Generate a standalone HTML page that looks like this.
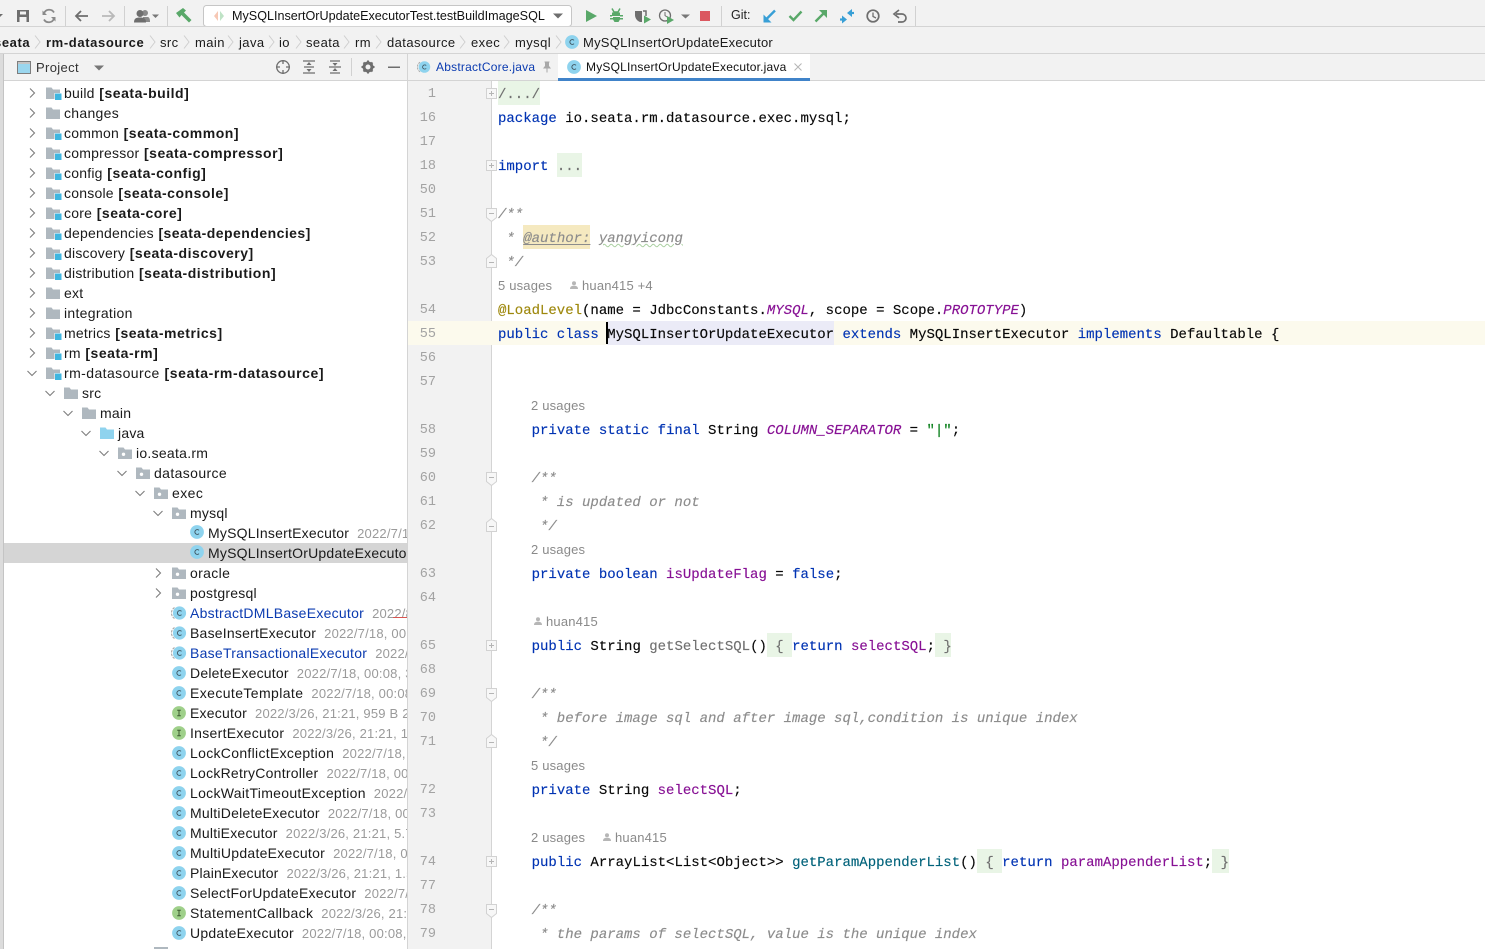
<!DOCTYPE html>
<html><head><meta charset="utf-8"><title>MySQLInsertOrUpdateExecutor</title>
<style>
html,body{margin:0;padding:0;width:1485px;height:949px;overflow:hidden;background:#fff;font-family:"Liberation Sans",sans-serif;color:#000}
.a{position:absolute}
#top{left:0;top:0;width:1485px;height:54px;background:#f2f2f2}
.sep{position:absolute;top:6px;width:1px;height:20px;background:#d1d1d1}
.bc{position:absolute;top:27px;height:26px;line-height:31px;font-size:13px;letter-spacing:.42px;white-space:pre;color:#1a1a1a}
.ch{position:absolute;top:35px}
#tree{left:4px;top:81px;width:403px;height:868px;overflow:hidden;background:#fff}
.r{position:absolute;left:0;width:403px;height:20px;line-height:20px;font-size:14px;letter-spacing:.22px;white-space:pre;color:#1a1a1a}
.r b{font-weight:bold;letter-spacing:.52px;margin-left:.5px}
.r i{font-style:normal;color:#9a9a9a;font-size:13px;letter-spacing:.2px;margin-left:8px}
.r svg{position:absolute;top:0}
.t{position:absolute;top:0}
.bl{color:#0b3bb0}
.l{position:absolute;left:498px;height:24px;line-height:28px;font-family:"Liberation Mono",monospace;font-size:14px;white-space:pre;color:#080808;-webkit-text-stroke:.15px}
.n{position:absolute;left:408px;width:28px;height:24px;line-height:28px;text-align:right;font-family:"Liberation Mono",monospace;font-size:13.5px;color:#a3a3a3}
.u{position:absolute;left:498px;height:24px;line-height:26px;font-size:13px;letter-spacing:.18px;color:#8a8a8a;white-space:pre}
.k{color:#0033b3}.c{color:#8c8c8c;font-style:italic}.f{color:#871094}.fi{color:#871094;font-style:italic}.m{color:#00627a}.g{color:#707070}.s{color:#067d17}.y{color:#9e880d}
.fold{background:#e9f5e6}
</style></head><body>
<svg width="0" height="0" style="position:absolute">
<defs>
<symbol id="fo" viewBox="0 0 16 16"><path d="M0 2.500h5.500l1.500 2h7v9.500H0z" fill="#afb8bf"/></symbol>
<symbol id="mo" viewBox="0 0 16 16"><path d="M0 2.500h5.500l1.500 2h7v9.500H0z" fill="#afb8bf"/><rect x="8.500" y="8" width="7" height="7" fill="#fff"/><rect x="9" y="8.500" width="6.500" height="6.500" fill="#40b6e0"/></symbol>
<symbol id="sr" viewBox="0 0 16 16"><path d="M0 2.500h5.500l1.500 2h7v9.500H0z" fill="#8fd3ee"/></symbol>
<symbol id="pk" viewBox="0 0 16 16"><path d="M0 2.500h5.500l1.500 2h7v9.500H0z" fill="#afb8bf"/><circle cx="5.500" cy="9.300" r="1.700" fill="#fff"/></symbol>
<symbol id="cl" viewBox="0 0 16 16"><circle cx="8" cy="8" r="6.900" fill="#8ed3ee"/><path d="M10 6.300A2.400 2.400 0 1 0 10 9.700" fill="none" stroke="#3f5560" stroke-width="1"/></symbol>
<symbol id="ab" viewBox="0 0 16 16"><path d="M3.500 2.500A6.500 6.500 0 0 0 3.500 13.500" fill="none" stroke="#a9a9a9" stroke-width="1.100" stroke-dasharray="2.500 1"/><circle cx="8.500" cy="8" r="6.600" fill="#8ed3ee"/><path d="M10.500 6.300A2.400 2.400 0 1 0 10.500 9.700" fill="none" stroke="#3f5560" stroke-width="1"/></symbol>
<symbol id="in" viewBox="0 0 16 16"><circle cx="8" cy="8" r="6.900" fill="#9fd08a"/><path d="M6.200 5.200h3.600M6.200 10.800h3.600M8 5.200v5.600" fill="none" stroke="#3c5a30" stroke-width="1"/></symbol>
<symbol id="cr" viewBox="0 0 10 10"><path d="M3 .5l4.500 4.500L3 9.500" fill="none" stroke="#7d7d7d" stroke-width="1.100"/></symbol>
<symbol id="cd" viewBox="0 0 10 10"><path d="M.5 3L5 7.500 9.500 3" fill="none" stroke="#7d7d7d" stroke-width="1.100"/></symbol>
<symbol id="gc" viewBox="0 0 7 14"><path d="M1 .5l5 6.500-5 6.500" fill="none" stroke="#cfcfcf" stroke-width="1"/></symbol>
<symbol id="fp" viewBox="0 0 11 11"><rect x=".5" y=".5" width="10" height="10" fill="#f7f7f7" stroke="#d2d2d2"/><path d="M3 5.500h5M5.500 3v5" stroke="#b5b5b5"/></symbol>
<symbol id="fm" viewBox="0 0 11 14"><path d="M.5.500h10v9l-5 4-5-4z" fill="#f7f7f7" stroke="#d2d2d2"/><path d="M3 5.500h5" stroke="#b5b5b5"/></symbol>
<symbol id="fe" viewBox="0 0 11 14"><path d="M.5 13.500h10v-9l-5-4-5 4z" fill="#f7f7f7" stroke="#d2d2d2"/><path d="M3 8.500h5" stroke="#b5b5b5"/></symbol>
<symbol id="pr" viewBox="0 0 10 10"><circle cx="5" cy="3.200" r="2" fill="#b6b6b6"/><path d="M1 9c0-2.500 1.500-3.300 4-3.300S9 6.500 9 9z" fill="#b6b6b6"/></symbol>
</defs></svg>

<div class="a" id="top"></div>

<!-- toolbar icons -->
<svg class="a" style="left:0;top:0" width="925" height="27" viewBox="0 0 925 27">
<path d="M0 14h3l-3 3z" fill="#6e6e6e"/>
<path d="M17 10h12v12H17z" fill="#6e6e6e"/><rect x="20" y="11.500" width="6" height="3" fill="#f2f2f2"/><rect x="19.500" y="17" width="7" height="5" fill="#f2f2f2"/>
<path d="M54 12.500A5.500 5.500 0 0 0 44 13.500M44 19.500A5.500 5.500 0 0 0 54 18.500" fill="none" stroke="#8a8a8a" stroke-width="1.800"/><path d="M42.500 10.500v4.500h4.500zM55.500 21.500V17H51z" fill="#8a8a8a"/>
<path d="M88 16H76M81 11l-5 5 5 5" fill="none" stroke="#6e6e6e" stroke-width="1.800"/>
<path d="M102 16h12M109 11l5 5-5 5" fill="none" stroke="#b9b9b9" stroke-width="1.800"/>
<circle cx="145" cy="13" r="3" fill="#8a8a8a"/><path d="M143 22v-5h5c1.500.5 2 2 2 5z" fill="#8a8a8a"/><circle cx="140" cy="13.500" r="3.500" fill="#6e6e6e"/><path d="M134 22.500c0-4 2-5 6-5s6 1 6 5z" fill="#6e6e6e"/><path d="M152 14.500h7l-3.500 3.500z" fill="#777"/>
<path d="M176 13l7-5 3 2.500-2 2 7.500 7.500-2.500 2.500-7.500-7.500-2 2.500z" fill="#59a869"/>
<rect x="203.500" y="5.500" width="368" height="21" rx="3" fill="#fff" stroke="#c6c6c6"/>
<path d="M218 11l-4 5 4 5z" fill="#f7c8b5"/><path d="M220 11l4 5-4 5z" fill="#bfe3c6"/>
<path d="M553 13.500h10l-5 5z" fill="#6e6e6e"/>
<path d="M586 10l11 6-11 6z" fill="#59a869"/>
<path d="M612 12.500h8v2.500h3v1.500h-3v1.500h3V19.500h-3l-1.500 2.500h-4L613 19.500h-3V18h3v-1.500h-3V15h2z" fill="#59a869"/><path d="M612 8.500l2 3.500h4l2-3.500" fill="none" stroke="#59a869" stroke-width="1.500"/><path d="M612 16.500h8" stroke="#f2f2f2"/>
<path d="M635 11h7v11h-2c-3-1-5-4-5-7z" fill="#6e6e6e"/><path d="M643 11h3v5" fill="none" stroke="#6e6e6e" stroke-width="1.500"/><path d="M644 15.500l7 4-7 4z" fill="#59a869"/>
<circle cx="665" cy="15.500" r="5.500" fill="none" stroke="#6e6e6e" stroke-width="1.300"/><path d="M665 12V15.500l2 1.500" fill="none" stroke="#6e6e6e"/><path d="M667 16l7 4-7 4z" fill="#59a869"/>
<path d="M681 14.500h9l-4.500 4z" fill="#777"/>
<rect x="700" y="11" width="10" height="10" fill="#db5860"/>
<path d="M775 10.500l-8 8" fill="none" stroke="#389fd6" stroke-width="2.400"/><path d="M763.500 14.500v8h8z" fill="#389fd6"/>
<path d="M789.500 16l4 4 8-8.500" fill="none" stroke="#59a869" stroke-width="2.400"/>
<path d="M815.500 21.500l8-8" fill="none" stroke="#59a869" stroke-width="2.400"/><path d="M819 10h8v8z" fill="#59a869"/>
<path d="M840 19.500h3" stroke="#389fd6" stroke-width="2.200"/><path d="M842 15.500l5 4-5 4z" fill="#389fd6"/><path d="M851 13h3" stroke="#389fd6" stroke-width="2.200"/><path d="M852 9l-5 4 5 4z" fill="#389fd6"/>
<circle cx="873" cy="16" r="5.800" fill="none" stroke="#6e6e6e" stroke-width="1.700"/><path d="M873 12.500V16.500l3 1.500" fill="none" stroke="#6e6e6e" stroke-width="1.300"/>
<path d="M896 14h6a4 4 0 0 1 0 8h-4" fill="none" stroke="#6e6e6e" stroke-width="1.700"/><path d="M899 10l-5 4 5 4" fill="none" stroke="#6e6e6e" stroke-width="1.700"/>
</svg>
<div class="sep" style="left:65px"></div><div class="sep" style="left:124px"></div><div class="sep" style="left:167px"></div><div class="sep" style="left:721px"></div><div class="sep" style="left:915px"></div>
<div class="a" style="left:232px;top:5px;height:22px;line-height:23px;font-size:12.6px;white-space:pre;color:#111">MySQLInsertOrUpdateExecutorTest.testBuildImageSQL</div>
<div class="a" style="left:731px;top:5px;height:22px;line-height:21px;font-size:12.5px;white-space:pre;color:#222">Git:</div>

<!-- breadcrumb -->
<div class="a" style="left:0;top:26px;width:1485px;height:1px;background:#d4d4d4"></div>
<div class="a" style="left:0;top:53px;width:1485px;height:1px;background:#d4d4d4"></div>
<div class="bc" style="left:-6px;font-weight:bold;letter-spacing:.6px">seata</div>
<div class="bc" style="left:46px;font-weight:bold;letter-spacing:.62px">rm-datasource</div>
<div class="bc" style="left:160px">src</div>
<div class="bc" style="left:195px">main</div>
<div class="bc" style="left:239px">java</div>
<div class="bc" style="left:279px">io</div>
<div class="bc" style="left:306px">seata</div>
<div class="bc" style="left:355px">rm</div>
<div class="bc" style="left:387px">datasource</div>
<div class="bc" style="left:471px">exec</div>
<div class="bc" style="left:515px">mysql</div>
<div class="bc" style="left:583px;letter-spacing:.24px">MySQLInsertOrUpdateExecutor</div>
<svg class="ch" style="left:34px" width="7" height="14"><use href="#gc"/></svg>
<svg class="ch" style="left:149px" width="7" height="14"><use href="#gc"/></svg>
<svg class="ch" style="left:183px" width="7" height="14"><use href="#gc"/></svg>
<svg class="ch" style="left:227px" width="7" height="14"><use href="#gc"/></svg>
<svg class="ch" style="left:268px" width="7" height="14"><use href="#gc"/></svg>
<svg class="ch" style="left:295px" width="7" height="14"><use href="#gc"/></svg>
<svg class="ch" style="left:343px" width="7" height="14"><use href="#gc"/></svg>
<svg class="ch" style="left:375px" width="7" height="14"><use href="#gc"/></svg>
<svg class="ch" style="left:459px" width="7" height="14"><use href="#gc"/></svg>
<svg class="ch" style="left:503px" width="7" height="14"><use href="#gc"/></svg>
<svg class="ch" style="left:555px" width="7" height="14"><use href="#gc"/></svg>
<svg class="a" style="left:565px;top:35px" width="14" height="14" viewBox="1 1 14 14"><use href="#cl" width="16" height="16"/></svg>

<!-- project header -->
<div class="a" style="left:0;top:54px;width:1485px;height:26px;background:#f2f2f2"></div>
<div class="a" style="left:0;top:80px;width:1485px;height:1px;background:#d4d4d4"></div>
<div class="a" style="left:407px;top:54px;width:1px;height:895px;background:#d4d4d4"></div>
<div class="a" style="left:0;top:54px;width:3px;height:895px;background:#dcdcdc"></div>
<div class="a" style="left:3px;top:54px;width:1px;height:895px;background:#c4c4c4"></div>
<svg class="a" style="left:0;top:54px" width="407" height="26">
<rect x="17.500" y="7.500" width="13" height="12" fill="#9ad6ee" stroke="#7d7d7d"/><rect x="18" y="8" width="12" height="2" fill="#c4c4c4"/>
<path d="M94 11.500h10l-5 5z" fill="#777"/>
<circle cx="283" cy="13" r="6.300" fill="none" stroke="#6e6e6e" stroke-width="1.300"/><path d="M283 6v4M283 16v4M276 13h4M286 13h4" stroke="#6e6e6e" stroke-width="1.300"/>
<path d="M303 7h12M303 19h12M304 13h10" stroke="#6e6e6e" stroke-width="1.300"/><path d="M309 8l-2.500 3h5zM309 18l-2.500-3h5z" fill="#6e6e6e"/>
<path d="M329 13h12M330 7h10M330 19h10" stroke="#6e6e6e" stroke-width="1.300"/><path d="M335 12l-2.500-3h5zM335 14l-2.500 3h5z" fill="#6e6e6e"/>
<rect x="351" y="4" width="1" height="18" fill="#d1d1d1"/>
<circle cx="368" cy="13" r="4" fill="none" stroke="#6e6e6e" stroke-width="3"/><path d="M368 6.500v2M368 17.500v2M361.500 13h2M372.500 13h2M363.500 8.500l1.500 1.500M371 16l1.500 1.500M372.500 8.500L371 10M365 16l-1.500 1.500" stroke="#6e6e6e" stroke-width="2"/>
<rect x="388" y="12.500" width="12" height="1.500" fill="#6e6e6e"/>
</svg>
<div class="a" style="left:36px;top:54px;height:26px;line-height:27px;font-size:13px;letter-spacing:.35px;color:#333">Project</div>

<!-- tabs -->
<svg class="a" style="left:417px;top:60px" width="14" height="14" viewBox="0 0 16 16"><use href="#ab" width="16" height="16"/></svg>
<div class="a" style="left:436px;top:54px;height:26px;line-height:26px;font-size:12px;letter-spacing:.23px;color:#0b3bb0;white-space:pre">AbstractCore.java</div>
<svg class="a" style="left:542px;top:61px" width="10" height="12" viewBox="0 0 10 12"><path d="M2.500 1h5M3.500 1v4L2 7h6L6.500 5V1M5 7v4.500" fill="#a8a8a8" stroke="#a8a8a8"/></svg>
<div class="a" style="left:558px;top:54px;width:252px;height:24px;background:#fff"></div>
<div class="a" style="left:558px;top:78px;width:252px;height:3px;background:#4083c9"></div>
<svg class="a" style="left:567px;top:60px" width="14" height="14" viewBox="1 1 14 14"><use href="#cl" width="16" height="16"/></svg>
<div class="a" style="left:586px;top:54px;height:26px;line-height:26px;font-size:12px;letter-spacing:.2px;color:#111;white-space:pre">MySQLInsertOrUpdateExecutor.java</div>
<svg class="a" style="left:794px;top:63px" width="8" height="8"><path d="M.5.500l7 7M7.500.500l-7 7" stroke="#b5b5b5"/></svg>

<!-- tree -->
<div class="a" id="tree">
<div class="a" style="left:0;top:462px;width:403px;height:20px;background:#d5d5d5"></div>
<div class="r" style="top:2px"><svg style="left:23px;top:5px" width="10" height="10"><use href="#cr"/></svg><svg style="left:42px;top:2px" width="16" height="16"><use href="#mo"/></svg><span class="t" style="left:60px">build <b>[seata-build]</b></span></div>
<div class="r" style="top:22px"><svg style="left:23px;top:5px" width="10" height="10"><use href="#cr"/></svg><svg style="left:42px;top:2px" width="16" height="16"><use href="#fo"/></svg><span class="t" style="left:60px;letter-spacing:.3px">changes</span></div>
<div class="r" style="top:42px"><svg style="left:23px;top:5px" width="10" height="10"><use href="#cr"/></svg><svg style="left:42px;top:2px" width="16" height="16"><use href="#mo"/></svg><span class="t" style="left:60px">common <b>[seata-common]</b></span></div>
<div class="r" style="top:62px"><svg style="left:23px;top:5px" width="10" height="10"><use href="#cr"/></svg><svg style="left:42px;top:2px" width="16" height="16"><use href="#mo"/></svg><span class="t" style="left:60px">compressor <b>[seata-compressor]</b></span></div>
<div class="r" style="top:82px"><svg style="left:23px;top:5px" width="10" height="10"><use href="#cr"/></svg><svg style="left:42px;top:2px" width="16" height="16"><use href="#mo"/></svg><span class="t" style="left:60px">config <b>[seata-config]</b></span></div>
<div class="r" style="top:102px"><svg style="left:23px;top:5px" width="10" height="10"><use href="#cr"/></svg><svg style="left:42px;top:2px" width="16" height="16"><use href="#mo"/></svg><span class="t" style="left:60px">console <b>[seata-console]</b></span></div>
<div class="r" style="top:122px"><svg style="left:23px;top:5px" width="10" height="10"><use href="#cr"/></svg><svg style="left:42px;top:2px" width="16" height="16"><use href="#mo"/></svg><span class="t" style="left:60px">core <b>[seata-core]</b></span></div>
<div class="r" style="top:142px"><svg style="left:23px;top:5px" width="10" height="10"><use href="#cr"/></svg><svg style="left:42px;top:2px" width="16" height="16"><use href="#mo"/></svg><span class="t" style="left:60px">dependencies <b style="letter-spacing:.46px">[seata-dependencies]</b></span></div>
<div class="r" style="top:162px"><svg style="left:23px;top:5px" width="10" height="10"><use href="#cr"/></svg><svg style="left:42px;top:2px" width="16" height="16"><use href="#mo"/></svg><span class="t" style="left:60px">discovery <b>[seata-discovery]</b></span></div>
<div class="r" style="top:182px"><svg style="left:23px;top:5px" width="10" height="10"><use href="#cr"/></svg><svg style="left:42px;top:2px" width="16" height="16"><use href="#mo"/></svg><span class="t" style="left:60px">distribution <b>[seata-distribution]</b></span></div>
<div class="r" style="top:202px"><svg style="left:23px;top:5px" width="10" height="10"><use href="#cr"/></svg><svg style="left:42px;top:2px" width="16" height="16"><use href="#fo"/></svg><span class="t" style="left:60px">ext</span></div>
<div class="r" style="top:222px"><svg style="left:23px;top:5px" width="10" height="10"><use href="#cr"/></svg><svg style="left:42px;top:2px" width="16" height="16"><use href="#fo"/></svg><span class="t" style="left:60px;letter-spacing:.3px">integration</span></div>
<div class="r" style="top:242px"><svg style="left:23px;top:5px" width="10" height="10"><use href="#cr"/></svg><svg style="left:42px;top:2px" width="16" height="16"><use href="#mo"/></svg><span class="t" style="left:60px">metrics <b>[seata-metrics]</b></span></div>
<div class="r" style="top:262px"><svg style="left:23px;top:5px" width="10" height="10"><use href="#cr"/></svg><svg style="left:42px;top:2px" width="16" height="16"><use href="#mo"/></svg><span class="t" style="left:60px">rm <b>[seata-rm]</b></span></div>
<div class="r" style="top:282px"><svg style="left:23px;top:5px" width="10" height="10"><use href="#cd"/></svg><svg style="left:42px;top:2px" width="16" height="16"><use href="#mo"/></svg><span class="t" style="left:60px;letter-spacing:.42px">rm-datasource <b style="letter-spacing:.6px">[seata-rm-datasource]</b></span></div>
<div class="r" style="top:302px"><svg style="left:41px;top:5px" width="10" height="10"><use href="#cd"/></svg><svg style="left:60px;top:2px" width="16" height="16"><use href="#fo"/></svg><span class="t" style="left:78px">src</span></div>
<div class="r" style="top:322px"><svg style="left:59px;top:5px" width="10" height="10"><use href="#cd"/></svg><svg style="left:78px;top:2px" width="16" height="16"><use href="#fo"/></svg><span class="t" style="left:96px">main</span></div>
<div class="r" style="top:342px"><svg style="left:77px;top:5px" width="10" height="10"><use href="#cd"/></svg><svg style="left:96px;top:2px" width="16" height="16"><use href="#sr"/></svg><span class="t" style="left:114px">java</span></div>
<div class="r" style="top:362px"><svg style="left:95px;top:5px" width="10" height="10"><use href="#cd"/></svg><svg style="left:114px;top:2px" width="16" height="16"><use href="#pk"/></svg><span class="t" style="left:132px;letter-spacing:.27px">io.seata.rm</span></div>
<div class="r" style="top:382px"><svg style="left:113px;top:5px" width="10" height="10"><use href="#cd"/></svg><svg style="left:132px;top:2px" width="16" height="16"><use href="#pk"/></svg><span class="t" style="left:150px;letter-spacing:.38px">datasource</span></div>
<div class="r" style="top:402px"><svg style="left:131px;top:5px" width="10" height="10"><use href="#cd"/></svg><svg style="left:150px;top:2px" width="16" height="16"><use href="#pk"/></svg><span class="t" style="left:168px;letter-spacing:.45px">exec</span></div>
<div class="r" style="top:422px"><svg style="left:149px;top:5px" width="10" height="10"><use href="#cd"/></svg><svg style="left:168px;top:2px" width="16" height="16"><use href="#pk"/></svg><span class="t" style="left:186px">mysql</span></div>
<div class="r" style="top:442px"><svg style="left:186px;top:2px" width="14" height="14" viewBox="1 1 14 14"><use href="#cl" width="16" height="16"/></svg><span class="t" style="left:204px">MySQLInsertExecutor<i>2022/7/18, 00:08, 5.2 kB</i></span></div>
<div class="r" style="top:462px"><svg style="left:186px;top:2px" width="14" height="14" viewBox="1 1 14 14"><use href="#cl" width="16" height="16"/></svg><span class="t" style="left:204px">MySQLInsertOrUpdateExecutor</span></div>
<div class="r" style="top:482px"><svg style="left:149px;top:5px" width="10" height="10"><use href="#cr"/></svg><svg style="left:168px;top:2px" width="16" height="16"><use href="#pk"/></svg><span class="t" style="left:186px;letter-spacing:.35px">oracle</span></div>
<div class="r" style="top:502px"><svg style="left:149px;top:5px" width="10" height="10"><use href="#cr"/></svg><svg style="left:168px;top:2px" width="16" height="16"><use href="#pk"/></svg><span class="t" style="left:186px">postgresql</span></div>
<div class="r" style="top:522px"><svg style="left:167px;top:2px" width="16" height="16"><use href="#ab"/></svg><span class="t bl" style="left:186px;letter-spacing:.26px">AbstractDMLBaseExecutor<i>2022/8/1, 00:08</i></span></div>
<div class="r" style="top:542px"><svg style="left:167px;top:2px" width="16" height="16"><use href="#ab"/></svg><span class="t" style="left:186px">BaseInsertExecutor<i>2022/7/18, 00:08</i></span></div>
<div class="r" style="top:562px"><svg style="left:167px;top:2px" width="16" height="16"><use href="#ab"/></svg><span class="t bl" style="left:186px;letter-spacing:.26px">BaseTransactionalExecutor<i>2022/7/18</i></span></div>
<div class="r" style="top:582px"><svg style="left:167px;top:2px" width="16" height="16"><use href="#cl"/></svg><span class="t" style="left:186px">DeleteExecutor<i>2022/7/18, 00:08, 3 kB</i></span></div>
<div class="r" style="top:602px"><svg style="left:167px;top:2px" width="16" height="16"><use href="#cl"/></svg><span class="t" style="left:186px;letter-spacing:.4px">ExecuteTemplate<i>2022/7/18, 00:08</i></span></div>
<div class="r" style="top:622px"><svg style="left:167px;top:2px" width="16" height="16"><use href="#in"/></svg><span class="t" style="left:186px">Executor<i>2022/3/26, 21:21, 959 B 2022</i></span></div>
<div class="r" style="top:642px"><svg style="left:167px;top:2px" width="16" height="16"><use href="#in"/></svg><span class="t" style="left:186px;letter-spacing:.29px">InsertExecutor<i>2022/3/26, 21:21, 1.2 kB</i></span></div>
<div class="r" style="top:662px"><svg style="left:167px;top:2px" width="16" height="16"><use href="#cl"/></svg><span class="t" style="left:186px;letter-spacing:.31px">LockConflictException<i>2022/7/18, 00:08</i></span></div>
<div class="r" style="top:682px"><svg style="left:167px;top:2px" width="16" height="16"><use href="#cl"/></svg><span class="t" style="left:186px;letter-spacing:.25px">LockRetryController<i>2022/7/18, 00:08</i></span></div>
<div class="r" style="top:702px"><svg style="left:167px;top:2px" width="16" height="16"><use href="#cl"/></svg><span class="t" style="left:186px;letter-spacing:.3px">LockWaitTimeoutException<i>2022/7/18</i></span></div>
<div class="r" style="top:722px"><svg style="left:167px;top:2px" width="16" height="16"><use href="#cl"/></svg><span class="t" style="left:186px;letter-spacing:.24px">MultiDeleteExecutor<i>2022/7/18, 00:08</i></span></div>
<div class="r" style="top:742px"><svg style="left:167px;top:2px" width="16" height="16"><use href="#cl"/></svg><span class="t" style="left:186px">MultiExecutor<i>2022/3/26, 21:21, 5.7 kB</i></span></div>
<div class="r" style="top:762px"><svg style="left:167px;top:2px" width="16" height="16"><use href="#cl"/></svg><span class="t" style="left:186px;letter-spacing:.27px">MultiUpdateExecutor<i>2022/7/18, 00:08</i></span></div>
<div class="r" style="top:782px"><svg style="left:167px;top:2px" width="16" height="16"><use href="#cl"/></svg><span class="t" style="left:186px;letter-spacing:.16px">PlainExecutor<i>2022/3/26, 21:21, 1.5 kB</i></span></div>
<div class="r" style="top:802px"><svg style="left:167px;top:2px" width="16" height="16"><use href="#cl"/></svg><span class="t" style="left:186px;letter-spacing:.26px">SelectForUpdateExecutor<i>2022/7/18</i></span></div>
<div class="r" style="top:822px"><svg style="left:167px;top:2px" width="16" height="16"><use href="#in"/></svg><span class="t" style="left:186px;letter-spacing:.34px">StatementCallback<i>2022/3/26, 21:21</i></span></div>
<div class="r" style="top:842px"><svg style="left:167px;top:2px" width="16" height="16"><use href="#cl"/></svg><span class="t" style="left:186px;letter-spacing:.25px">UpdateExecutor<i>2022/7/18, 00:08, 3 kB</i></span></div>
<div class="a" style="left:389px;top:536px;width:14px;height:1px;background:#d9534f"></div>
<div class="a" style="left:150px;top:866px;width:14px;height:2px;background:#afb8bf"></div>
</div>

<!-- gutter -->
<div class="a" style="left:408px;top:81px;width:83px;height:868px;background:#f2f2f2"></div>
<div class="a" style="left:491px;top:81px;width:1px;height:868px;background:#d4d4d4"></div>
<div class="a" style="left:408px;top:321px;width:1077px;height:24px;background:#fcfaed"></div>
<div class="a" style="left:607px;top:321px;width:227px;height:24px;background:#ebebf7"></div>
<div class="a" style="left:606px;top:322px;width:2px;height:22px;background:#000"></div>

<!-- fold backgrounds -->
<div class="a fold" style="left:498px;top:81px;width:42px;height:24px"></div>
<div class="a fold" style="left:557px;top:153px;width:25px;height:24px"></div>
<div class="a" style="left:523px;top:225px;width:67px;height:24px;background:#f5e9c0"></div>
<div class="a fold" style="left:767px;top:633px;width:25px;height:24px"></div>
<div class="a fold" style="left:935px;top:633px;width:16px;height:24px"></div>
<div class="a fold" style="left:977px;top:849px;width:25px;height:24px"></div>
<div class="a fold" style="left:1212px;top:849px;width:17px;height:24px"></div>

<!-- line numbers -->
<div class="n" style="top:81px">1</div><div class="n" style="top:105px">16</div><div class="n" style="top:129px">17</div><div class="n" style="top:153px">18</div><div class="n" style="top:177px">50</div><div class="n" style="top:201px">51</div><div class="n" style="top:225px">52</div><div class="n" style="top:249px">53</div><div class="n" style="top:297px">54</div><div class="n" style="top:321px">55</div><div class="n" style="top:345px">56</div><div class="n" style="top:369px">57</div><div class="n" style="top:417px">58</div><div class="n" style="top:441px">59</div><div class="n" style="top:465px">60</div><div class="n" style="top:489px">61</div><div class="n" style="top:513px">62</div><div class="n" style="top:561px">63</div><div class="n" style="top:585px">64</div><div class="n" style="top:633px">65</div><div class="n" style="top:657px">68</div><div class="n" style="top:681px">69</div><div class="n" style="top:705px">70</div><div class="n" style="top:729px">71</div><div class="n" style="top:777px">72</div><div class="n" style="top:801px">73</div><div class="n" style="top:849px">74</div><div class="n" style="top:873px">77</div><div class="n" style="top:897px">78</div><div class="n" style="top:921px">79</div>

<!-- fold markers -->
<svg class="a" style="left:486px;top:88px" width="11" height="11"><use href="#fp"/></svg>
<svg class="a" style="left:486px;top:160px" width="11" height="11"><use href="#fp"/></svg>
<svg class="a" style="left:486px;top:208px" width="11" height="14"><use href="#fm"/></svg>
<svg class="a" style="left:486px;top:254px" width="11" height="14"><use href="#fe"/></svg>
<svg class="a" style="left:486px;top:472px" width="11" height="14"><use href="#fm"/></svg>
<svg class="a" style="left:486px;top:518px" width="11" height="14"><use href="#fe"/></svg>
<svg class="a" style="left:486px;top:640px" width="11" height="11"><use href="#fp"/></svg>
<svg class="a" style="left:486px;top:688px" width="11" height="14"><use href="#fm"/></svg>
<svg class="a" style="left:486px;top:734px" width="11" height="14"><use href="#fe"/></svg>
<svg class="a" style="left:486px;top:856px" width="11" height="11"><use href="#fp"/></svg>
<svg class="a" style="left:486px;top:904px" width="11" height="14"><use href="#fm"/></svg>

<!-- code -->
<div class="l g" style="top:81px">/.../</div>
<div class="l" style="top:105px"><span class="k">package</span> io.seata.rm.datasource.exec.mysql;</div>
<div class="l" style="top:153px"><span class="k">import</span> <span class="g">...</span></div>
<div class="l c" style="top:201px">/**</div>
<div class="l c" style="top:225px"> * <u style="text-underline-offset:2px">@author:</u> <span style="text-decoration:underline wavy #a9cfa0;text-decoration-thickness:1px">yangyicong</span></div>
<div class="l c" style="top:249px"> */</div>
<div class="u" style="top:273px">5 usages</div>
<svg class="a" style="left:569px;top:280px" width="10" height="10"><use href="#pr"/></svg>
<div class="u" style="left:582px;top:273px">huan415 +4</div>
<div class="l" style="top:297px"><span class="y">@LoadLevel</span>(name = JdbcConstants.<span class="fi">MYSQL</span>, scope = Scope.<span class="fi">PROTOTYPE</span>)</div>
<div class="l" style="top:321px"><span class="k">public class</span> MySQLInsertOrUpdateExecutor <span class="k">extends</span> MySQLInsertExecutor <span class="k">implements</span> Defaultable {</div>
<div class="u" style="left:531px;top:393px">2 usages</div>
<div class="l" style="top:417px">    <span class="k">private static final</span> String <span class="fi">COLUMN_SEPARATOR</span> = <span class="s">"|"</span>;</div>
<div class="l c" style="top:465px">    /**</div>
<div class="l c" style="top:489px">     * is updated or not</div>
<div class="l c" style="top:513px">     */</div>
<div class="u" style="left:531px;top:537px">2 usages</div>
<div class="l" style="top:561px">    <span class="k">private boolean</span> <span class="f">isUpdateFlag</span> = <span class="k">false</span>;</div>
<svg class="a" style="left:533px;top:616px" width="10" height="10"><use href="#pr"/></svg>
<div class="u" style="left:546px;top:609px">huan415</div>
<div class="l" style="top:633px">    <span class="k">public</span> String <span class="g">getSelectSQL</span>() <span class="g">{</span> <span class="k">return</span> <span class="f">selectSQL</span>; <span class="g">}</span></div>
<div class="l c" style="top:681px">    /**</div>
<div class="l c" style="top:705px">     * before image sql and after image sql,condition is unique index</div>
<div class="l c" style="top:729px">     */</div>
<div class="u" style="left:531px;top:753px">5 usages</div>
<div class="l" style="top:777px">    <span class="k">private</span> String <span class="f">selectSQL</span>;</div>
<div class="u" style="left:531px;top:825px">2 usages</div>
<svg class="a" style="left:602px;top:832px" width="10" height="10"><use href="#pr"/></svg>
<div class="u" style="left:615px;top:825px">huan415</div>
<div class="l" style="top:849px">    <span class="k">public</span> ArrayList&lt;List&lt;Object&gt;&gt; <span class="m">getParamAppenderList</span>() <span class="g">{</span> <span class="k">return</span> <span class="f">paramAppenderList</span>; <span class="g">}</span></div>
<div class="l c" style="top:897px">    /**</div>
<div class="l c" style="top:921px">     * the params of selectSQL, value is the unique index</div>
</body></html>
